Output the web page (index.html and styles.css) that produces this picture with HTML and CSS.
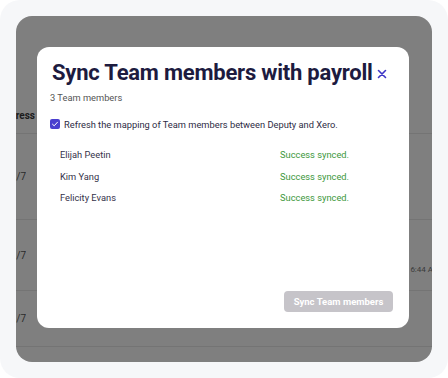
FILE: index.html
```html
<!DOCTYPE html>
<html lang="en">
<head>
  <meta charset="UTF-8" />
  <title>Sync Team members</title>
  <link rel="stylesheet" href="styles.css">
</head>
<body>
  <div class="frame">
    <div class="app">

      <!-- TABLE BEHIND OVERLAY -->
      <div class="table">
        <div class="row row-head">
          <div class="cell-clip head-clip"><span class="head-text">Address</span></div>
        </div>
        <div class="row row-1">
          <div class="cell-clip"><span>/7</span></div>
        </div>
        <div class="row row-2">
          <div class="cell-clip"><span>/7</span></div>
          <span class="time">6:44 AM</span>
        </div>
        <div class="row row-3">
          <div class="cell-clip"><span>/7</span></div>
        </div>
        <div class="row row-4">
          <span class="avatar"></span>
        </div>
      </div>

      <!-- MODAL -->
      <div class="modal">
        <div class="modal-header">
          <h1>Sync Team members with payroll</h1>
          <button class="close" aria-label="Close">
            <svg width="10" height="10" viewBox="0 0 10 10">
              <path d="M1.5 1.5 L8.5 8.5 M8.5 1.5 L1.5 8.5" stroke="#3d35c6" stroke-width="1.6" stroke-linecap="round"/>
            </svg>
          </button>
        </div>
        <p class="count">3 Team members</p>

        <label class="check">
          <span class="box">
            <svg width="8" height="8" viewBox="0 0 8 8">
              <path d="M1.5 4.2 L3.2 5.8 L6.5 2.2" fill="none" stroke="#fff" stroke-width="1" stroke-linecap="round" stroke-linejoin="round"/>
            </svg>
          </span>
          Refresh the mapping of Team members between Deputy and Xero.
        </label>

        <ul class="members">
          <li><span class="name">Elijah Peetin</span><span class="status">Success synced.</span></li>
          <li><span class="name">Kim Yang</span><span class="status">Success synced.</span></li>
          <li><span class="name">Felicity Evans</span><span class="status">Success synced.</span></li>
        </ul>

        <div class="modal-footer">
          <button class="sync-btn" disabled>Sync Team members</button>
        </div>
      </div>

    </div>
  </div>
</body>
</html>
```

FILE: styles.css
```css
* {
  box-sizing: border-box;
}

body {
  margin: 0;
  background-color: #ffffff;
  font-family: 'Roboto', 'Liberation Sans', sans-serif;
}

/* ===== FRAME ===== */
.frame {
  width: 448px;
  height: 378px;
  padding: 16px;
  background-color: #f6f7f9;
  border-radius: 20px;
}

.app {
  position: relative;
  height: 346px;
  background-color: #7f7f7f;
  border-radius: 16px;
  overflow: hidden;
}

/* ===== DIMMED TABLE ===== */
.table {
  display: flex;
  flex-direction: column;
}

.row {
  display: flex;
  align-items: center;
  justify-content: space-between;
  border-bottom: 1px solid #747474;
  font-size: 10px;
  color: #2b2b2b;
}

.row-head {
  height: 118px;
  align-items: flex-end;
  padding-bottom: 12px;
}

.row-1 { height: 86px; }
.row-2 { height: 71px; align-items: flex-start; padding-top: 30px; }
.row-3 { height: 56px; }
.row-4 { height: 40px; border-bottom: none; align-items: flex-end; }

.cell-clip {
  display: flex;
  justify-content: flex-end;
  width: 10px;
  overflow: hidden;
  white-space: nowrap;
}

.head-clip {
  width: 19px;
}

.head-text {
  font-weight: 700;
  font-size: 10px;
  color: #1b1b1b;
}

.time {
  margin-top: 15px;
  margin-right: -8px;
  font-size: 8px;
  color: #3a3a3a;
}

.avatar {
  width: 16px;
  height: 16px;
  margin-left: 319px;
  margin-bottom: -14px;
  border-radius: 50%;
  background-color: #2c5d74;
}

/* ===== MODAL ===== */
.modal {
  position: absolute;
  left: 21px;
  top: 31px;
  width: 372px;
  height: 281px;
  padding: 12px 16px 16px 13px;
  background-color: #ffffff;
  border-radius: 12px;
  display: flex;
  flex-direction: column;
}

.modal-header {
  display: flex;
  align-items: center;
  gap: 4px;
}

h1 {
  margin: 0 0 0 2px;
  font-size: 22px;
  line-height: 28px;
  font-weight: 700;
  color: #1d1b3f;
  letter-spacing: -0.22px;
  white-space: nowrap;
}

.close {
  display: flex;
  padding: 0;
  margin-top: 2px;
  background: none;
  border: none;
  cursor: pointer;
}

.count {
  margin: 5px 0 0;
  font-size: 9.3px;
  line-height: 12px;
  color: #555555;
}

.check {
  display: flex;
  align-items: center;
  gap: 4px;
  height: 12px;
  margin-top: 14px;
  font-size: 9.3px;
  color: #2e2c45;
}

.box {
  display: flex;
  align-items: center;
  justify-content: center;
  width: 10px;
  height: 10px;
  border-radius: 2px;
  background-color: #4a3fcf;
}

.members {
  list-style: none;
  margin: 14px 0 0;
  padding: 0 0 0 10px;
}

.members li {
  display: flex;
  height: 21.5px;
  align-items: center;
  font-size: 9.3px;
}

.name {
  width: 220px;
  color: #35334a;
}

.status {
  color: #3c983c;
}

.modal-footer {
  margin-top: auto;
  display: flex;
  justify-content: flex-end;
}

.sync-btn {
  width: 109px;
  height: 21px;
  padding: 0;
  border: none;
  border-radius: 4px;
  background-color: #c6c4c9;
  color: #ffffff;
  font-family: inherit;
  font-size: 9.5px;
  font-weight: 700;
}
```
